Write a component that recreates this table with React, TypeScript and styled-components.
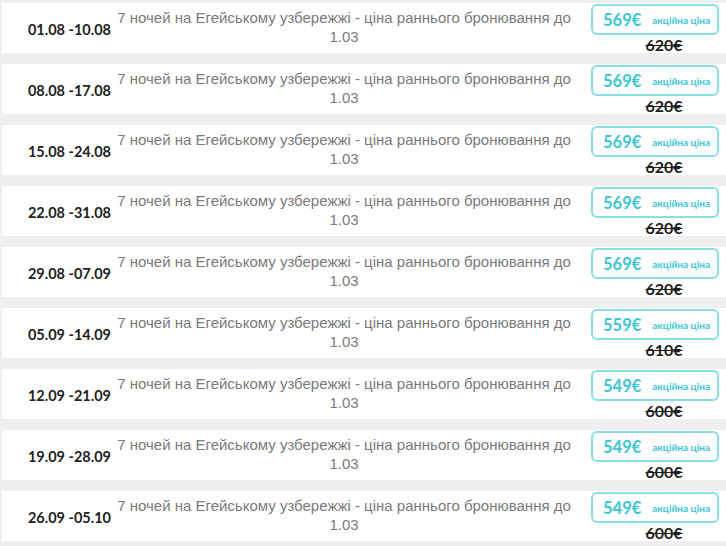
import React from 'react';
import styled, { createGlobalStyle } from 'styled-components';

const GlobalStyle = createGlobalStyle`
  html, body {
    margin: 0;
    padding: 0;
    background: #efefef;
  }
`;

const List = styled.div`
  display: flex;
  flex-direction: column;
  gap: 11px;
  padding-top: 3px;
`;

const Row = styled.div`
  display: flex;
  align-items: stretch;
  height: 50px;
  margin-left: 2px;
  background: #fff;
`;

const Dates = styled.div`
  width: 111px;
  flex: 0 0 111px;
  box-sizing: border-box;
  padding: 2px 2px 0 0;
  display: flex;
  align-items: center;
  justify-content: flex-end;
  font-family: Lato, 'Noto Sans', sans-serif;
  font-weight: 700;
  font-size: 14.5px;
  color: #222;
  white-space: nowrap;
`;

const Description = styled.div`
  flex: 1;
  margin-right: 16px;
  padding-top: 5px;
  text-align: center;
  font-family: 'Liberation Sans', Arial, sans-serif;
  font-size: 15px;
  line-height: 19px;
  color: #7a7a7a;
`;

const PriceCell = styled.div`
  flex: 0 0 128px;
  margin-right: 7px;
  padding-top: 1px;
  display: flex;
  flex-direction: column;
`;

const PriceBox = styled.div`
  box-sizing: border-box;
  height: 33px;
  border: 2px solid #8adfe7;
  border-radius: 6px;
  display: flex;
  align-items: center;
  padding: 0 0 0 10px;
  gap: 11px;
  font-family: Lato, 'Noto Sans', sans-serif;
  font-weight: 700;
  color: #3cc6d6;
`;

const Price = styled.span`
  font-size: 16.5px;
`;

const Label = styled.span`
  font-size: 10px;
`;

const OldPrice = styled.div`
  text-align: center;
  padding: 2px 0 0 18px;
  font-family: Lato, 'Noto Sans', sans-serif;
  font-weight: 700;
  font-size: 16px;
  line-height: 16px;
  color: #1e1e1e;
  text-decoration: line-through;
`;

const tours = [
  { dates: '01.08 -10.08', price: '569€', old: '620€' },
  { dates: '08.08 -17.08', price: '569€', old: '620€' },
  { dates: '15.08 -24.08', price: '569€', old: '620€' },
  { dates: '22.08 -31.08', price: '569€', old: '620€' },
  { dates: '29.08 -07.09', price: '569€', old: '620€' },
  { dates: '05.09 -14.09', price: '559€', old: '610€' },
  { dates: '12.09 -21.09', price: '549€', old: '600€' },
  { dates: '19.09 -28.09', price: '549€', old: '600€' },
  { dates: '26.09 -05.10', price: '549€', old: '600€' },
];

const App = () => {
  return (
    <>
      <GlobalStyle />
      <List>
        {tours.map((t, idx) => (
          <Row key={idx}>
            <Dates>{t.dates}</Dates>
            <Description>
              7 ночей на Егейському узбережжі - ціна раннього бронювання до 1.03
            </Description>
            <PriceCell>
              <PriceBox>
                <Price>{t.price}</Price>
                <Label>акційна ціна</Label>
              </PriceBox>
              <OldPrice>{t.old}</OldPrice>
            </PriceCell>
          </Row>
        ))}
      </List>
    </>
  );
};

export default App;
